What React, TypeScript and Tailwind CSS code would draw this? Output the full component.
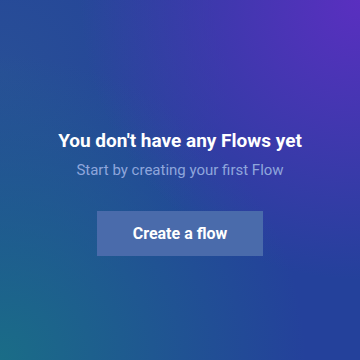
import React from "react";

const App = () => {
  return (
    <div
      className="w-[360px] h-[360px] flex flex-col items-center bg-[#24419b] bg-[radial-gradient(circle_at_100%_0%,#5a2fc0_0%,rgba(90,47,192,0)_55%),radial-gradient(circle_at_0%_100%,#1a6d87_0%,rgba(26,109,135,0)_60%),radial-gradient(circle_at_0%_20%,#284f96_0%,rgba(40,79,150,0)_50%)]"
      style={{ fontFamily: "Roboto, 'Liberation Sans', sans-serif" }}
    >
      <h1 className="mt-[128px] text-[19px] leading-[26px] font-bold text-white">
        You don't have any Flows yet
      </h1>
      <p className="mt-[6px] text-[15px] leading-[20px] text-[#8fa6dc]">
        Start by creating your first Flow
      </p>
      <button className="mt-[31px] w-[166px] h-[45px] bg-[#4a6bab] text-white text-[16px] font-bold">
        Create a flow
      </button>
    </div>
  );
};

export default App;
